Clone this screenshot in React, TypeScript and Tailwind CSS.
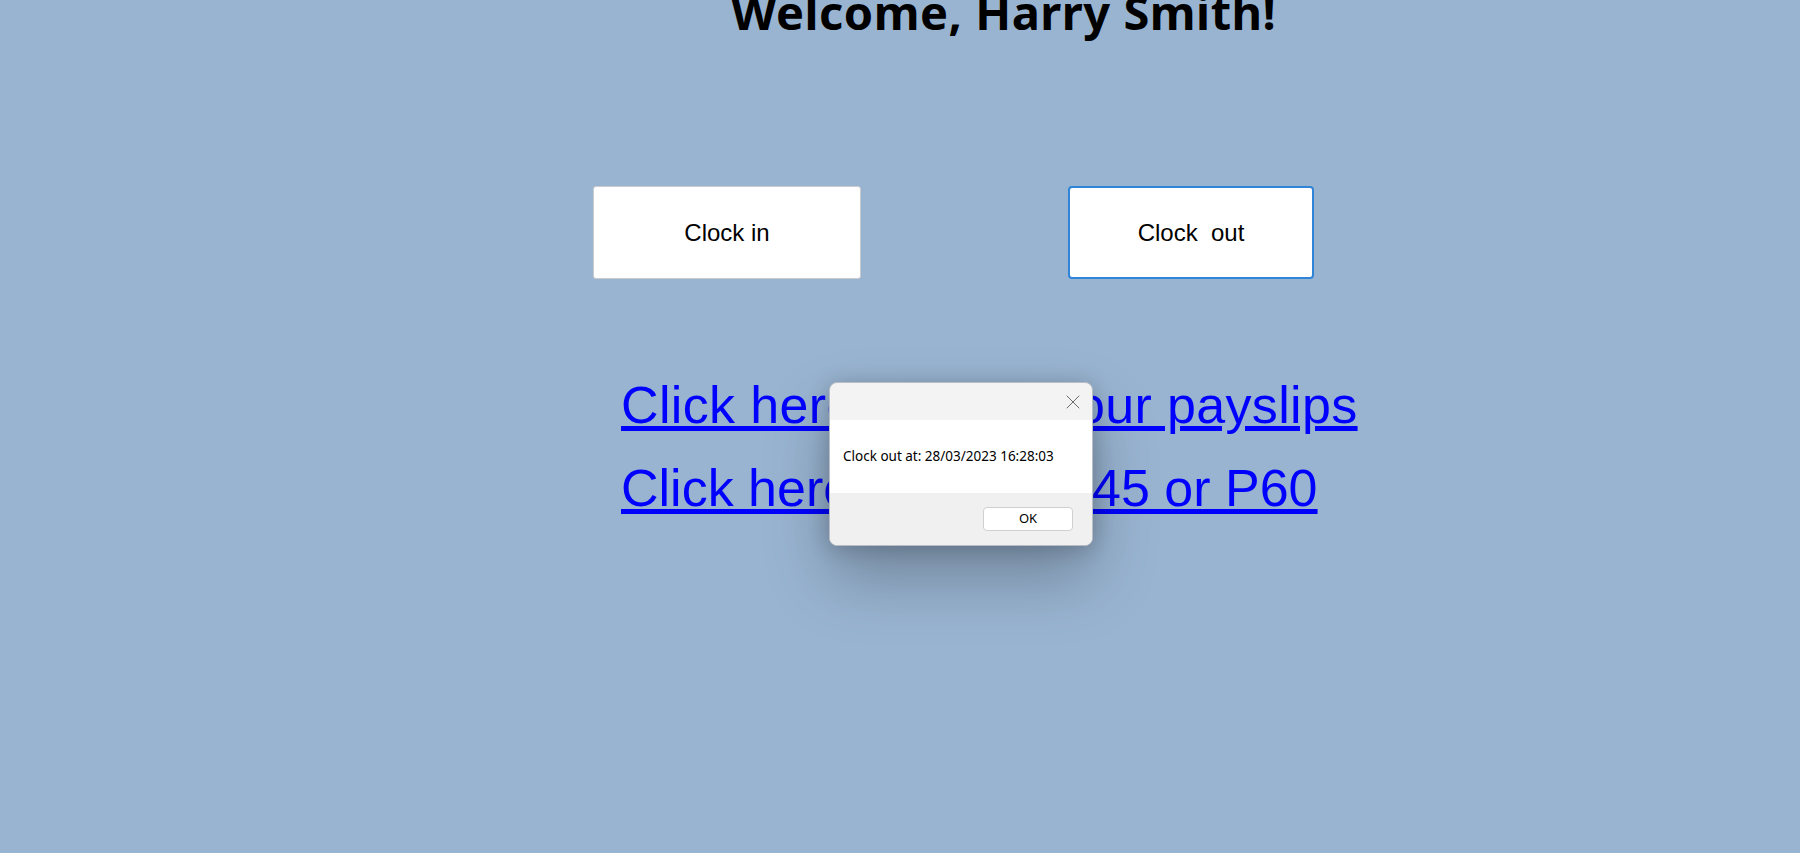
import { X } from "lucide-react";

function MessageBox() {
  return (
    <div className="absolute left-[829px] top-[382px] w-[264px] rounded-[8px] border border-[#b9bec6] bg-[#f3f3f3] shadow-[0_32px_64px_rgba(0,0,0,0.26),0_2px_21px_rgba(0,0,0,0.2)] overflow-hidden font-['Noto_Sans',sans-serif]">
      <div className="h-[37px] flex items-center justify-end pr-[7px]">
        <X className="w-[24px] h-[24px] text-[#6b6b6b]" strokeWidth={1} />
      </div>
      <div className="h-[73px] bg-white flex items-center pl-[13px] text-[13.5px] text-black">
        Clock out at: 28/03/2023 16:28:03
      </div>
      <div className="h-[52px] bg-[#f0f0f0] flex justify-end items-start pt-[14px] pr-[19px]">
        <button className="w-[90px] h-[24px] rounded-[4px] border border-[#cfcfcf] bg-white text-[13px] text-black flex items-center justify-center">
          OK
        </button>
      </div>
    </div>
  );
}

export default function App() {
  return (
    <div className="relative min-h-[853px] w-full bg-[#99b4d1] overflow-hidden">
      <div className="flex flex-col">
        <h1 className="ml-[731px] leading-[24px] text-[47px] font-bold tracking-[0.5px] text-black font-['Noto_Sans',sans-serif] whitespace-nowrap">
          Welcome, Harry Smith!
        </h1>

        <div className="flex mt-[162px] ml-[593px] gap-[207px] font-['Liberation_Sans',Arial,sans-serif]">
          <button className="w-[268px] h-[93px] rounded-[3px] border border-[#cbcbcb] bg-white text-[24px] text-black flex items-center justify-center">
            Clock in
          </button>
          <button className="w-[246px] h-[93px] rounded-[4px] border-2 border-[#2f84d8] bg-white text-[24px] text-black flex items-center justify-center whitespace-pre">
            Clock  out
          </button>
        </div>

        <div className="mt-[85px] ml-[621px] flex flex-col items-start font-['Liberation_Sans',Arial,sans-serif] text-[52px] leading-[83px] text-[#0000ff]">
          <a href="#" className="underline whitespace-nowrap tracking-[0.35px]">Click here to view your payslips</a>
          <a href="#" className="underline whitespace-nowrap">Click here for your P45 or P60</a>
        </div>
      </div>

      <MessageBox />
    </div>
  );
}
